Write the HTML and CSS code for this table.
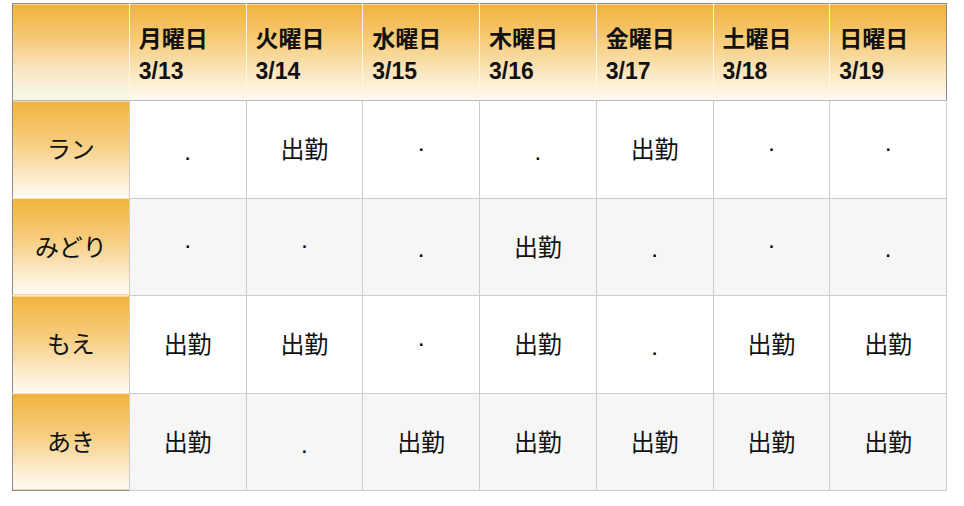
FILE: index.html
```html
<!DOCTYPE html>
<html lang="ja">
<head>
<meta charset="utf-8">
<title>シフト表</title>
<link rel="stylesheet" href="styles.css">
</head>
<body>
<table class="shift">
  <colgroup>
    <col class="c"><col class="c"><col class="c"><col class="c"><col class="c"><col class="c"><col class="c"><col class="c">
  </colgroup>
  <thead>
    <tr class="head">
      <th class="corner"></th>
      <th class="day">月曜日<br>3/13</th>
      <th class="day">火曜日<br>3/14</th>
      <th class="day">水曜日<br>3/15</th>
      <th class="day">木曜日<br>3/16</th>
      <th class="day">金曜日<br>3/17</th>
      <th class="day">土曜日<br>3/18</th>
      <th class="day">日曜日<br>3/19</th>
    </tr>
  </thead>
  <tbody>
    <tr class="row odd">
      <th class="name">ラン</th>
      <td><span class="p">.</span></td>
      <td>出勤</td>
      <td><span class="m">·</span></td>
      <td><span class="p">.</span></td>
      <td>出勤</td>
      <td><span class="m">·</span></td>
      <td><span class="m">·</span></td>
    </tr>
    <tr class="row even">
      <th class="name">みどり</th>
      <td><span class="m">·</span></td>
      <td><span class="m">·</span></td>
      <td><span class="p">.</span></td>
      <td>出勤</td>
      <td><span class="p">.</span></td>
      <td><span class="m">·</span></td>
      <td><span class="p">.</span></td>
    </tr>
    <tr class="row odd">
      <th class="name">もえ</th>
      <td>出勤</td>
      <td>出勤</td>
      <td><span class="m">·</span></td>
      <td>出勤</td>
      <td><span class="p">.</span></td>
      <td>出勤</td>
      <td>出勤</td>
    </tr>
    <tr class="row even last">
      <th class="name">あき</th>
      <td>出勤</td>
      <td><span class="p">.</span></td>
      <td>出勤</td>
      <td>出勤</td>
      <td>出勤</td>
      <td>出勤</td>
      <td>出勤</td>
    </tr>
  </tbody>
</table>
</body>
</html>
```

FILE: styles.css
```css
html, body {
  margin: 0;
  padding: 0;
  background: #ffffff;
}
body {
  padding: 3px 0 0 12px;
  font-family: "Liberation Sans", "Noto Sans CJK JP", sans-serif;
  color: #111111;
}
.shift {
  border-collapse: collapse;
  table-layout: fixed;
  width: 934px;
  border: 1px solid #8c8c8c;
}
.c {
  width: 116.75px;
}
.head {
  height: 97px;
}
.row {
  height: 97.6px;
}
.day {
  background: linear-gradient(to bottom, #f2b23c 0%, #f6ca76 35%, #fbe9c6 75%, #fffbf3 100%);
  border-left: 1px solid #fff6e4;
  border-bottom: 1px solid #b9b9b9;
  text-align: left;
  vertical-align: top;
  padding: 19px 0 0 9px;
  font-size: 23px;
  font-weight: bold;
  line-height: 32px;
  color: #111111;
}
.corner {
  background: linear-gradient(to bottom, #f2b23c 0%, #f5c877 35%, #f8e8c8 70%, #f4f9ea 100%);
  border-bottom: 1px solid #b9b9b9;
  padding: 0;
}
.name {
  background: linear-gradient(to bottom, #f2b33d 0%, #f6cb7a 40%, #fbe8c4 75%, #fffbf4 100%);
  border-top: 1px solid #f6e4c0;
  border-right: 1px solid #cccccc;
  font-weight: normal;
  font-size: 24px;
  text-align: center;
  vertical-align: middle;
  padding: 0 0 3px 0;
  color: #111111;
}
td {
  border: 1px solid #cccccc;
  text-align: center;
  vertical-align: middle;
  font-size: 24px;
  padding: 0 0 3px 0;
  color: #111111;
}
.odd td {
  background: #ffffff;
}
.even td {
  background: #f6f6f6;
}
.p {
  display: inline-block;
  font-weight: normal;
  color: #000000;
  transform: translateY(4px);
}
.m {
  display: inline-block;
  font-weight: normal;
  color: #000000;
  transform: translateY(0px);
}
```
